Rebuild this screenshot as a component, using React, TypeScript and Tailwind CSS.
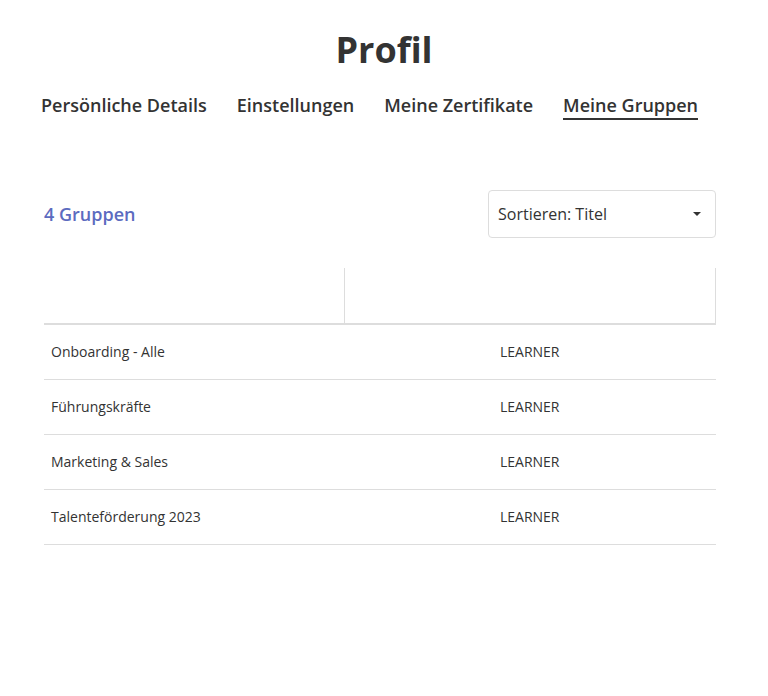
import React from 'react';

const groups = [
  { id: 1, title: 'Onboarding - Alle', role: 'LEARNER' },
  { id: 2, title: 'Führungskräfte', role: 'LEARNER' },
  { id: 3, title: 'Marketing & Sales', role: 'LEARNER' },
  { id: 4, title: 'Talenteförderung 2023', role: 'LEARNER' },
];

const tabs = [
  { id: 'details', label: 'Persönliche Details' },
  { id: 'settings', label: 'Einstellungen' },
  { id: 'certs', label: 'Meine Zertifikate' },
  { id: 'groups', label: 'Meine Gruppen' },
];

export default function App() {
  const active = 'groups';

  return (
    <div className="min-h-[696px] w-[768px] bg-white text-[#333] font-['Open_Sans',sans-serif]">
      {/* Header */}
      <h1 className="pt-[26px] text-center text-[36px] font-bold leading-[48px]">Profil</h1>

      {/* Tabs */}
      <nav className="mt-[19px] flex gap-[30px] pl-[41px]">
        {tabs.map(tab => (
          <button
            key={tab.id}
            className={`pb-[1px] text-[18px] font-semibold leading-[24px] border-b-2 ${
              active === tab.id ? 'border-[#333]' : 'border-transparent'
            }`}
          >
            {tab.label}
          </button>
        ))}
      </nav>

      <div className="mx-[44px] w-[672px]">
        {/* Toolbar */}
        <div className="mt-[70px] flex items-center justify-between">
          <p className="text-[18px] font-semibold text-[#5c6bc0]">4 Gruppen</p>
          <div className="flex h-[48px] w-[228px] items-center justify-between rounded-[4px] border border-[#ddd] pl-[9px] pr-[14px] text-[16px]">
            <span>Sortieren: Titel</span>
            <svg width="8" height="4" viewBox="0 0 8 4">
              <path d="M0 0h8L4 4z" fill="#333" />
            </svg>
          </div>
        </div>

        {/* Table */}
        <table className="mt-[30px] w-full border-collapse text-[14px]">
          <thead>
            <tr className="h-[56px] border-b-2 border-[#ddd]">
              <th className="w-[300px] border-r border-[#ddd]" />
              <th className="border-r border-[#ddd]" />
            </tr>
          </thead>
          <tbody>
            {groups.map(g => (
              <tr key={g.id} className="h-[55px] border-b border-[#ddd]">
                <td className="pl-[7px]">{g.title}</td>
                <td className="text-center">{g.role}</td>
              </tr>
            ))}
          </tbody>
        </table>
      </div>
    </div>
  );
}
